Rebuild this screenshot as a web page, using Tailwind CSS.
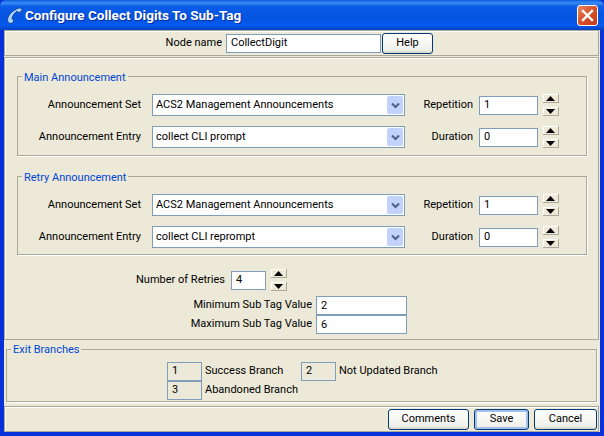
<!DOCTYPE html>
<html lang="en">
<head>
  <meta charset="UTF-8" />
  <title>Configure Collect Digits To Sub-Tag</title>
  <script src="https://cdn.jsdelivr.net/npm/@tailwindcss/browser@4"></script>
</head>
<body class="bg-[#ece9d8] font-['Roboto',sans-serif] text-[11px] text-black overflow-hidden">
  <div class="w-[604px] h-[436px] flex flex-col bg-[#0831d9]">
    <!-- title bar -->
    <div class="h-[30px] shrink-0 flex items-center pl-[6px] pr-[6px] rounded-t-[6px] bg-[linear-gradient(180deg,#0a5de0_0%,#3b8cf5_10%,#0a5ce8_22%,#0554e0_60%,#0659ee_85%,#0340c0_100%)]">
      <svg class="w-[17px] h-[18px] shrink-0" viewBox="0 0 17 18">
        <path d="M10.500 3C12.500 1.500 15.500 1.500 16 3.500L15 6L12 6.500L11.200 5.200C9 6 6 10 6 13L7.500 13.500L7.500 16L5 17.500C3 17.500 1.500 16 1.500 14C1.500 10 6 5 10.500 3Z" fill="#a9d4f7" stroke="#12408f" stroke-width=".9"/>
      </svg>
      <div class="ml-[2px] font-bold text-[13.5px] text-white [text-shadow:1px_1px_0_#0a2f9c] whitespace-nowrap">Configure Collect Digits To Sub-Tag</div>
      <div class="ml-auto w-[21px] h-[21px] rounded-[3px] border border-white bg-[linear-gradient(135deg,#e88a6a,#d9532c_45%,#c23a14)] flex items-center justify-center">
        <svg class="w-[13px] h-[13px]" viewBox="0 0 13 13"><path d="M2 2l9 9M11 2l-9 9" stroke="#fff" stroke-width="2.400" stroke-linecap="square"/></svg>
      </div>
    </div>

    <div class="ml-[4px] mr-[4px] mb-[4px] h-[402px] flex flex-col bg-[#ece9d8]">
      <!-- node name -->
      <div class="h-[26px] shrink-0 border border-[#aca899] shadow-[inset_1px_1px_0_#fff] flex items-center mr-[1px]">
        <span class="w-[217px] text-right">Node name</span>
        <input class="ml-[4px] w-[155px] h-[19px] border border-[#7f9db9] bg-white px-[4px] pb-[1px] outline-none" value="CollectDigit" />
        <button class="ml-[1px] w-[51px] h-[21px] rounded-[3px] border border-[#003c74] bg-[linear-gradient(180deg,#fff,#f0f0ea_85%,#d6d0c5)]">Help</button>
      </div>

      <!-- announcements -->
      <div class="mt-[1px] h-[283px] shrink-0 border border-[#aca899] shadow-[inset_1px_1px_0_#fff] px-[12px] pt-[18px] flex flex-col mr-[1px]">
        <div class="relative h-[80px] shrink-0 w-[570px] border border-[#aca899] shadow-[1px_1px_0_#fff] flex flex-col gap-[10px] pt-[17px]">
          <span class="absolute left-[4px] top-[-7px] bg-[#ece9d8] px-[2px] text-[#0046d5]">Main Announcement</span>
          <div class="flex items-center h-[22px]">
            <span class="w-[123px] pt-[1px] text-right">Announcement Set</span>
            <div class="ml-[11px] w-[253px] h-[22px] border border-[#7f9db9] bg-white flex items-center pl-[3px] pr-[1px]">
              <span class="pt-[1px]">ACS2 Management Announcements</span>
              <span class="ml-auto w-[16px] h-[18px] rounded-[2px] bg-[#c1d3fb] flex items-center justify-center">
                <svg class="w-[9px] h-[7px]" viewBox="0 0 9 7"><path d="M1 1.500l3.500 3.500L8 1.500" fill="none" stroke="#4d6185" stroke-width="2"/></svg>
              </span>
            </div>
            <span class="w-[68px] pt-[1px] text-right">Repetition</span>
            <input class="ml-[6px] w-[59px] h-[19px] border border-[#7f9db9] bg-white px-[4px] pb-[2px] outline-none" value="1" />
            <div class="ml-[5px] w-[16px] flex flex-col gap-[4px]">
              <div class="h-[9px] bg-[#ece9d8] border-r border-b border-[#aca899] shadow-[inset_1px_1px_0_#fff] flex items-center justify-center"><svg class="w-[9px] h-[5px]" viewBox="0 0 9 5"><path d="M4.500 0L9 5H0z"/></svg></div>
              <div class="h-[9px] bg-[#ece9d8] border-r border-b border-[#aca899] shadow-[inset_1px_1px_0_#fff] flex items-center justify-center"><svg class="w-[9px] h-[5px]" viewBox="0 0 9 5"><path d="M0 0h9L4.500 5z"/></svg></div>
            </div>
          </div>
          <div class="flex items-center h-[22px]">
            <span class="w-[123px] pt-[1px] text-right">Announcement Entry</span>
            <div class="ml-[11px] w-[253px] h-[22px] border border-[#7f9db9] bg-white flex items-center pl-[3px] pr-[1px]">
              <span class="pt-[1px]">collect CLI prompt</span>
              <span class="ml-auto w-[16px] h-[18px] rounded-[2px] bg-[#c1d3fb] flex items-center justify-center">
                <svg class="w-[9px] h-[7px]" viewBox="0 0 9 7"><path d="M1 1.500l3.500 3.500L8 1.500" fill="none" stroke="#4d6185" stroke-width="2"/></svg>
              </span>
            </div>
            <span class="w-[68px] pt-[1px] text-right">Duration</span>
            <input class="ml-[6px] w-[59px] h-[19px] border border-[#7f9db9] bg-white px-[4px] pb-[2px] outline-none" value="0" />
            <div class="ml-[5px] w-[16px] flex flex-col gap-[4px]">
              <div class="h-[9px] bg-[#ece9d8] border-r border-b border-[#aca899] shadow-[inset_1px_1px_0_#fff] flex items-center justify-center"><svg class="w-[9px] h-[5px]" viewBox="0 0 9 5"><path d="M4.500 0L9 5H0z"/></svg></div>
              <div class="h-[9px] bg-[#ece9d8] border-r border-b border-[#aca899] shadow-[inset_1px_1px_0_#fff] flex items-center justify-center"><svg class="w-[9px] h-[5px]" viewBox="0 0 9 5"><path d="M0 0h9L4.500 5z"/></svg></div>
            </div>
          </div>
        </div>

        <div class="relative mt-[20px] h-[79px] shrink-0 w-[570px] border border-[#aca899] shadow-[1px_1px_0_#fff] flex flex-col gap-[10px] pt-[17px]">
          <span class="absolute left-[4px] top-[-7px] bg-[#ece9d8] px-[2px] text-[#0046d5]">Retry Announcement</span>
          <div class="flex items-center h-[22px]">
            <span class="w-[123px] pt-[1px] text-right">Announcement Set</span>
            <div class="ml-[11px] w-[253px] h-[22px] border border-[#7f9db9] bg-white flex items-center pl-[3px] pr-[1px]">
              <span class="pt-[1px]">ACS2 Management Announcements</span>
              <span class="ml-auto w-[16px] h-[18px] rounded-[2px] bg-[#c1d3fb] flex items-center justify-center">
                <svg class="w-[9px] h-[7px]" viewBox="0 0 9 7"><path d="M1 1.500l3.500 3.500L8 1.500" fill="none" stroke="#4d6185" stroke-width="2"/></svg>
              </span>
            </div>
            <span class="w-[68px] pt-[1px] text-right">Repetition</span>
            <input class="ml-[6px] w-[59px] h-[19px] border border-[#7f9db9] bg-white px-[4px] pb-[2px] outline-none" value="1" />
            <div class="ml-[5px] w-[16px] flex flex-col gap-[4px]">
              <div class="h-[9px] bg-[#ece9d8] border-r border-b border-[#aca899] shadow-[inset_1px_1px_0_#fff] flex items-center justify-center"><svg class="w-[9px] h-[5px]" viewBox="0 0 9 5"><path d="M4.500 0L9 5H0z"/></svg></div>
              <div class="h-[9px] bg-[#ece9d8] border-r border-b border-[#aca899] shadow-[inset_1px_1px_0_#fff] flex items-center justify-center"><svg class="w-[9px] h-[5px]" viewBox="0 0 9 5"><path d="M0 0h9L4.500 5z"/></svg></div>
            </div>
          </div>
          <div class="flex items-center h-[22px]">
            <span class="w-[123px] pt-[1px] text-right">Announcement Entry</span>
            <div class="ml-[11px] w-[253px] h-[22px] border border-[#7f9db9] bg-white flex items-center pl-[3px] pr-[1px]">
              <span class="pt-[1px]">collect CLI reprompt</span>
              <span class="ml-auto w-[16px] h-[18px] rounded-[2px] bg-[#c1d3fb] flex items-center justify-center">
                <svg class="w-[9px] h-[7px]" viewBox="0 0 9 7"><path d="M1 1.500l3.500 3.500L8 1.500" fill="none" stroke="#4d6185" stroke-width="2"/></svg>
              </span>
            </div>
            <span class="w-[68px] pt-[1px] text-right">Duration</span>
            <input class="ml-[6px] w-[59px] h-[19px] border border-[#7f9db9] bg-white px-[4px] pb-[2px] outline-none" value="0" />
            <div class="ml-[5px] w-[16px] flex flex-col gap-[4px]">
              <div class="h-[9px] bg-[#ece9d8] border-r border-b border-[#aca899] shadow-[inset_1px_1px_0_#fff] flex items-center justify-center"><svg class="w-[9px] h-[5px]" viewBox="0 0 9 5"><path d="M4.500 0L9 5H0z"/></svg></div>
              <div class="h-[9px] bg-[#ece9d8] border-r border-b border-[#aca899] shadow-[inset_1px_1px_0_#fff] flex items-center justify-center"><svg class="w-[9px] h-[5px]" viewBox="0 0 9 5"><path d="M0 0h9L4.500 5z"/></svg></div>
            </div>
          </div>
        </div>

        <!-- retries and sub tag values -->
        <div class="mt-[14px] flex items-center h-[22px]">
          <span class="w-[208px] pt-[1px] text-right">Number of Retries</span>
          <input class="ml-[6px] w-[35px] h-[19px] border border-[#7f9db9] bg-white px-[4px] pb-[2px] outline-none" value="4" />
          <div class="ml-[5px] w-[16px] flex flex-col gap-[4px]">
            <div class="h-[9px] bg-[#ece9d8] border-r border-b border-[#aca899] shadow-[inset_1px_1px_0_#fff] flex items-center justify-center"><svg class="w-[9px] h-[5px]" viewBox="0 0 9 5"><path d="M4.500 0L9 5H0z"/></svg></div>
            <div class="h-[9px] bg-[#ece9d8] border-r border-b border-[#aca899] shadow-[inset_1px_1px_0_#fff] flex items-center justify-center"><svg class="w-[9px] h-[5px]" viewBox="0 0 9 5"><path d="M0 0h9L4.500 5z"/></svg></div>
          </div>
        </div>
        <div class="mt-[5px] flex items-center">
          <span class="w-[295px] text-right">Minimum Sub Tag Value</span>
          <input class="ml-[4px] w-[91px] h-[19px] border border-[#7f9db9] bg-white px-[4px] pb-[1px] outline-none" value="2" />
        </div>
        <div class="flex items-center">
          <span class="w-[295px] text-right">Maximum Sub Tag Value</span>
          <input class="ml-[4px] w-[91px] h-[19px] border border-[#7f9db9] bg-white px-[4px] pb-[1px] outline-none" value="6" />
        </div>
      </div>

      <!-- exit branches -->
      <div class="relative mt-[9px] ml-[2px] w-[591px] h-[53px] shrink-0 border border-[#aca899] shadow-[1px_1px_0_#fff] pt-[12px] pl-[160px]">
        <span class="absolute left-[4px] top-[-8px] bg-[#ece9d8] px-[2px] text-[#0046d5]">Exit Branches</span>
        <div class="flex items-center h-[19px]">
          <div class="w-[35px] h-[19px] border border-[#7f9db9] px-[4px] flex items-center">1</div>
          <span class="ml-[3px] w-[96px]">Success Branch</span>
          <div class="w-[35px] h-[19px] border border-[#7f9db9] px-[4px] flex items-center">2</div>
          <span class="ml-[3px]">Not Updated Branch</span>
        </div>
        <div class="flex items-center h-[19px]">
          <div class="w-[35px] h-[19px] border border-[#7f9db9] px-[4px] flex items-center">3</div>
          <span class="ml-[3px]">Abandoned Branch</span>
        </div>
      </div>

      <!-- buttons -->
      <div class="mt-[4px] h-[26px] shrink-0 border border-[#aca899] shadow-[inset_1px_1px_0_#fff] flex items-center justify-end gap-[5px] pr-[1px] mr-[1px]">
        <button class="w-[81px] h-[21px] rounded-[3px] border border-[#003c74] bg-[linear-gradient(180deg,#fff,#f0f0ea_85%,#d6d0c5)]">Comments</button>
        <button class="w-[55px] h-[21px] rounded-[3px] border border-[#003c74] bg-[linear-gradient(180deg,#fff,#f0f0ea_85%,#d6d0c5)] shadow-[inset_0_0_0_2px_#a6c0ee]">Save</button>
        <button class="w-[63px] h-[21px] rounded-[3px] border border-[#003c74] bg-[linear-gradient(180deg,#fff,#f0f0ea_85%,#d6d0c5)]">Cancel</button>
      </div>
    </div>
  </div>
</body>
</html>
